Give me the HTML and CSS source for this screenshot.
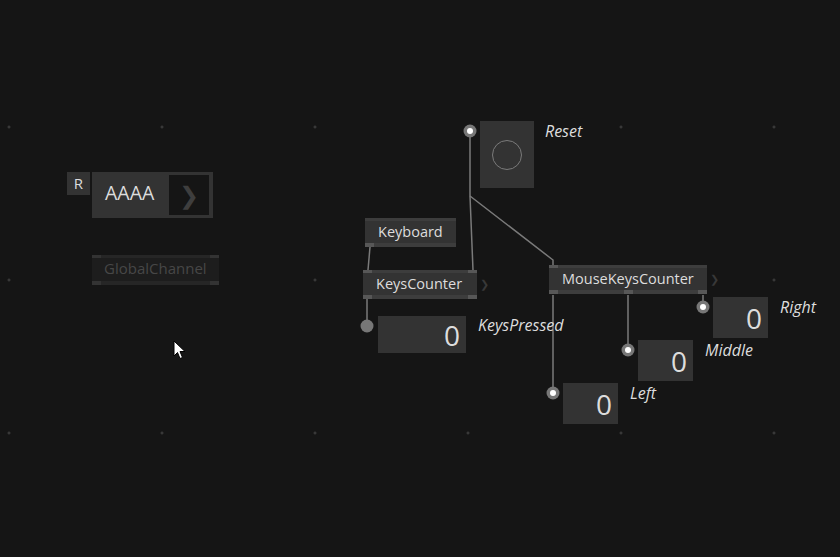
FILE: index.html
```html
<!DOCTYPE html>
<html lang="en">
<head>
    <meta charset="UTF-8">
    <title>Patch</title>
    <link rel="stylesheet" href="styles.css">
</head>
<body>
    <div class="patch">
        <svg class="wires" width="840" height="557">
            <polyline points="470,131 470,196 473,270" />
            <polyline points="470,196 553,260 553,265" />
            <line x1="370" y1="247" x2="368" y2="270" />
            <line x1="367" y1="299" x2="367" y2="326" />
            <line x1="553" y1="295" x2="553" y2="393" />
            <line x1="628" y1="295" x2="628" y2="350" />
            <line x1="703" y1="295" x2="703" y2="307" />
            <circle class="pin-plain" cx="367" cy="326" r="6.5" />
            <g class="iopin">
                <circle cx="470" cy="131" r="6.5" /><circle class="dot" cx="470" cy="131" r="3" />
                <circle cx="553" cy="393" r="6.5" /><circle class="dot" cx="553" cy="393" r="3" />
                <circle cx="628" cy="350" r="6.5" /><circle class="dot" cx="628" cy="350" r="3" />
                <circle cx="703" cy="307" r="6.5" /><circle class="dot" cx="703" cy="307" r="3" />
            </g>
        </svg>

        <div class="rbtn">R</div>
        <div class="send">
            <div class="send-text">AAAA</div>
            <div class="send-arrow">❯</div>
        </div>

        <div class="node ghost" style="left:92px;top:255px;width:127px;">
            GlobalChannel
            <span class="pin tl"></span><span class="pin tr"></span>
            <span class="pin bl"></span><span class="pin br"></span>
        </div>

        <div class="bang" style="left:480px;top:121px;"><span class="ring"></span></div>
        <div class="label" style="left:545px;top:120px;">Reset</div>

        <div class="node" style="left:365px;top:218px;width:91px;">
            Keyboard
            <span class="pin bl"></span>
        </div>

        <div class="node" style="left:363px;top:270px;width:114px;">
            KeysCounter
            <span class="pin tl"></span><span class="pin tr"></span>
            <span class="pin bl"></span><span class="pin br"></span>
            <span class="more">❯</span>
        </div>

        <div class="node" style="left:549px;top:265px;width:158px;">
            MouseKeysCounter
            <span class="pin tl"></span>
            <span class="pin bl"></span><span class="pin bm"></span><span class="pin br"></span>
            <span class="more">❯</span>
        </div>

        <div class="value" style="left:378px;top:316px;width:88px;height:37px;">0</div>
        <div class="label" style="left:478px;top:314px;">KeysPressed</div>

        <div class="value" style="left:713px;top:297px;">0</div>
        <div class="label" style="left:780px;top:296px;">Right</div>

        <div class="value" style="left:638px;top:340px;">0</div>
        <div class="label" style="left:705px;top:339px;">Middle</div>

        <div class="value" style="left:563px;top:383px;">0</div>
        <div class="label" style="left:630px;top:382px;">Left</div>

        <svg class="cursor" width="14" height="20" viewBox="0 0 14 20">
            <path d="M1 1 L1 16 L4.5 12.5 L7 18.5 L9.5 17.5 L7 11.5 L12 11.5 Z" />
        </svg>
    </div>
</body>
</html>
```

FILE: styles.css
```css
* {
    margin: 0;
    padding: 0;
    box-sizing: border-box;
}
body {
    background: #151515;
    font-family: "Open Sans", "Noto Sans", sans-serif;
    overflow: hidden;
}
.patch {
    position: relative;
    width: 840px;
    height: 557px;
    background-color: #151515;
    background-image: radial-gradient(circle, #444 1px, transparent 1.4px);
    background-size: 153px 153px;
    background-position: -67.5px 50.5px;
}
.wires {
    position: absolute;
    left: 0;
    top: 0;
}
.wires line,
.wires polyline {
    stroke: #7a7a7a;
    stroke-width: 1.5;
    fill: none;
}
.pin-plain {
    fill: #777;
}
.iopin circle {
    fill: #777;
}
.iopin circle.dot {
    fill: #fff;
}

.rbtn {
    position: absolute;
    left: 67px;
    top: 172px;
    width: 23px;
    height: 23px;
    background: #333;
    color: #ddd;
    font-size: 15px;
    line-height: 22px;
    text-align: center;
}
.send {
    position: absolute;
    left: 92px;
    top: 172px;
    width: 121px;
    height: 46px;
    background: #333;
    display: flex;
    padding: 3px 4px 3px 0;
}
.send-text {
    flex: 1;
    color: #ddd;
    font-size: 19.5px;
    line-height: 36px;
    padding-left: 13px;
}
.send-arrow {
    width: 40px;
    background: #151515;
    color: #3e3e3e;
    font-size: 24px;
    line-height: 40px;
    text-align: center;
}

.node {
    position: absolute;
    height: 29px;
    background: #333;
    border-top: 3px solid #3d3d3d;
    border-bottom: 4px solid #3d3d3d;
    color: #ddd;
    font-size: 14.5px;
    line-height: 22px;
    padding-left: 13px;
    white-space: nowrap;
}
.node.ghost {
    height: 30px;
    background: #1d1d1d;
    border-color: #262626;
    color: #474747;
    font-size: 15px;
    line-height: 21px;
    padding-left: 12px;
}
.pin {
    position: absolute;
    width: 9px;
    height: 4px;
    background: #575757;
}
.ghost .pin {
    background: #333;
}
.pin.tl { left: 0; top: -3px; height: 3px; }
.pin.tr { right: 0; top: -3px; height: 3px; }
.pin.bl { left: 0; bottom: -4px; }
.pin.br { right: 0; bottom: -4px; }
.pin.bm { left: 75px; bottom: -4px; }
.more {
    position: absolute;
    right: -12px;
    top: 0;
    color: #383838;
    font-size: 11px;
}

.bang {
    position: absolute;
    width: 54px;
    height: 67px;
    background: #333;
    display: flex;
    align-items: center;
    justify-content: center;
}
.ring {
    width: 30px;
    height: 30px;
    border: 1.5px solid #7a7a7a;
    border-radius: 50%;
}
.label {
    position: absolute;
    color: #ddd;
    font-size: 16px;
    font-style: italic;
    line-height: 22px;
    white-space: nowrap;
}
.value {
    position: absolute;
    width: 55px;
    height: 41px;
    background: #333;
    color: #ddd;
    font-size: 28px;
    padding-right: 6px;
    display: flex;
    align-items: center;
    justify-content: flex-end;
}
.cursor {
    position: absolute;
    left: 173px;
    top: 340px;
}
.cursor path {
    fill: #fff;
    stroke: #000;
    stroke-width: 1;
}
```
